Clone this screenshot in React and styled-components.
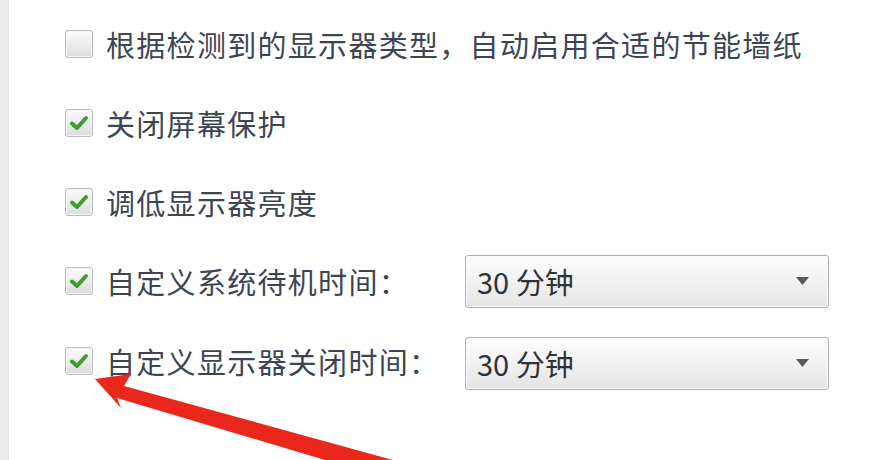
import React from "react";
import styled, { createGlobalStyle } from "styled-components";

const GlobalStyle = createGlobalStyle`
  html, body {
    margin: 0;
    padding: 0;
    background: #ffffff;
  }
  body {
    font-family: "Noto Sans CJK SC", "Noto Sans", sans-serif;
  }
`;

const Page = styled.div`
  position: relative;
  display: flex;
  width: 892px;
  height: 460px;
  overflow: hidden;
  background: #ffffff;
`;

const Strip = styled.div`
  width: 8px;
  flex-shrink: 0;
  background: #ececec;
  border-right: 1px solid #e2e2e2;
`;

const Content = styled.div`
  display: flex;
  flex-direction: column;
  padding: 4px 0 0 56px;
`;

const Row = styled.div`
  display: flex;
  align-items: center;
  height: ${(p) => p.$h || 79}px;
`;

const Box = styled.div`
  width: 28px;
  height: 28px;
  flex-shrink: 0;
  box-sizing: border-box;
  border: 1px solid #b9bcc0;
  border-radius: 3px;
  background: linear-gradient(#fbfbfb, #dcdde0);
  box-shadow: inset 0 0 0 1px #f4f4f4;
  display: flex;
  align-items: center;
  justify-content: center;
  margin-right: 13px;
`;

const Label = styled.span`
  font-size: 29px;
  color: #3d4552;
  white-space: nowrap;
  width: ${(p) => (p.$fixed ? "359px" : "auto")};
  letter-spacing: 1.3px;
`;

const Select = styled.div`
  width: 364px;
  height: 53px;
  box-sizing: border-box;
  border: 1px solid #aeb0b3;
  border-radius: 3px;
  background: linear-gradient(#fdfdfd 0%, #f1f1f1 50%, #e4e4e4 100%);
  box-shadow: inset 0 0 0 1px #fafafa;
  display: flex;
  align-items: center;
  justify-content: space-between;
  padding: 0 19px 0 11px;
  margin-top: ${(p) => p.$shift || 0}px;
`;

const SelectText = styled.span`
  font-size: 29px;
  color: #2f3338;
`;

const Check = () => (
  <svg width="20" height="18" viewBox="0 0 20 18">
    <path d="M3 9.5 L8 14 L17 4" fill="none" stroke="#3c9e2b" strokeWidth="4" strokeLinecap="round" strokeLinejoin="round" />
  </svg>
);

const Caret = () => (
  <svg width="13" height="8" viewBox="0 0 13 8">
    <path d="M0 0 H13 L6.5 8 Z" fill="#56595d" />
  </svg>
);

const Arrow = styled.svg`
  position: absolute;
  left: 0;
  top: 0;
  pointer-events: none;
`;

const Option = ({ checked, children }) => (
  <Row>
    <Box>{checked && <Check />}</Box>
    <Label>{children}</Label>
  </Row>
);

const TimeOption = ({ children, value, shift }) => (
  <Row $h={80}>
    <Box><Check /></Box>
    <Label $fixed>{children}</Label>
    <Select $shift={shift}>
      <SelectText>{value}</SelectText>
      <Caret />
    </Select>
  </Row>
);

export default function App() {
  return (
    <Page>
      <GlobalStyle />
      <Strip />
      <Content>
        <Option>根据检测到的显示器类型，自动启用合适的节能墙纸</Option>
        <Option checked>关闭屏幕保护</Option>
        <Option checked>调低显示器亮度</Option>
        <TimeOption value="30 分钟" shift={0}>自定义系统待机时间：</TimeOption>
        <TimeOption value="30 分钟" shift={4}>自定义显示器关闭时间：</TimeOption>
      </Content>
      <Arrow width="892" height="460" viewBox="0 0 892 460">
        <path
          d="M95 379 L131 374 L124 386 L400 462 L392 480 L117 398 L121 408 Z"
          fill="#e9271d"
        />
      </Arrow>
    </Page>
  );
}
